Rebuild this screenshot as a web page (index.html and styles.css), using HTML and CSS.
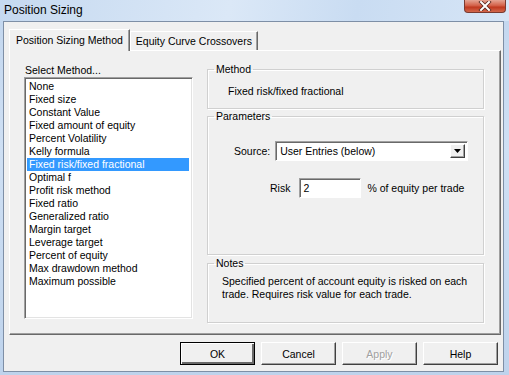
FILE: index.html
```html
<!DOCTYPE html>
<html lang="en">
<head>
    <meta charset="UTF-8">
    <title>Position Sizing</title>
    <link rel="stylesheet" href="styles.css">
</head>
<body>
    <div class="window">
        <div class="titlebar">
            <span class="title">Position Sizing</span>
            <button class="close" title="Close">
                <svg width="14" height="10" viewBox="0 0 14 10">
                    <path d="M3 1 L11 9 M11 1 L3 9" stroke="#5a2a22" stroke-width="3.6" stroke-linecap="square"/>
                    <path d="M3 1 L11 9 M11 1 L3 9" stroke="#fff" stroke-width="2" stroke-linecap="square"/>
                </svg>
            </button>
        </div>

        <div class="client">
            <div class="tabs">
                <div class="tab active">Position Sizing Method</div>
                <div class="tab">Equity Curve Crossovers</div>
            </div>

            <div class="panel">
                <div class="left-col">
                    <div class="list-label">Select Method...</div>
                    <ul class="listbox">
                        <li>None</li>
                        <li>Fixed size</li>
                        <li>Constant Value</li>
                        <li>Fixed amount of equity</li>
                        <li>Percent Volatility</li>
                        <li>Kelly formula</li>
                        <li class="selected">Fixed risk/fixed fractional</li>
                        <li>Optimal f</li>
                        <li>Profit risk method</li>
                        <li>Fixed ratio</li>
                        <li>Generalized ratio</li>
                        <li>Margin target</li>
                        <li>Leverage target</li>
                        <li>Percent of equity</li>
                        <li>Max drawdown method</li>
                        <li>Maximum possible</li>
                    </ul>
                </div>

                <div class="right-col">
                    <fieldset class="group group-method">
                        <legend>Method</legend>
                        <div class="method-name">Fixed risk/fixed fractional</div>
                    </fieldset>

                    <fieldset class="group group-params">
                        <legend>Parameters</legend>
                        <div class="source-row">
                            <span class="field-label">Source:</span>
                            <div class="combo">
                                <span class="combo-text">User Entries (below)</span>
                                <span class="combo-btn">
                                    <svg width="7" height="4" viewBox="0 0 7 4"><path d="M0 0 H7 L3.5 4 Z" fill="#000"/></svg>
                                </span>
                            </div>
                        </div>
                        <div class="risk-row">
                            <span class="field-label">Risk</span>
                            <div class="textbox">2</div>
                            <span class="unit">% of equity per trade</span>
                        </div>
                    </fieldset>

                    <fieldset class="group group-notes">
                        <legend>Notes</legend>
                        <p class="notes">Specified percent of account equity is risked on each trade. Requires risk value for each trade.</p>
                    </fieldset>
                </div>
            </div>

            <div class="buttons">
                <button class="btn default">OK</button>
                <button class="btn">Cancel</button>
                <button class="btn" disabled>Apply</button>
                <button class="btn">Help</button>
            </div>
        </div>
    </div>
</body>
</html>
```

FILE: styles.css
```css
body { margin: 0; padding: 0; font-family: "Liberation Sans", Arial, sans-serif; font-size: 10.5px; color: #000; background: #c8daf0; }

.window {
    width: 509px;
    height: 375px;
    background: linear-gradient(to bottom, #c2d6ee 0%, #cfe0f4 40%, #bed3ec 100%);
    display: flex;
    flex-direction: column;
    box-sizing: border-box;
}

/* title bar */
.titlebar {
    height: 21px;
    display: flex;
    align-items: flex-start;
    background: linear-gradient(100deg, #c5d9f0 0%, #dbe8f7 45%, #c9dcf2 70%, #d6e5f6 100%);
}
.title { font-size: 12px; margin: 3px 0 0 4px; color: #000; }
.close {
    margin-left: auto;
    margin-right: 3px;
    width: 42px;
    height: 13px;
    padding: 0;
    border: 1px solid #7a3a30;
    border-top: none;
    border-radius: 0 0 4px 4px;
    background: linear-gradient(to bottom, #e5a493 0%, #d4634b 45%, #c0391f 60%, #d2684d 100%);
    display: flex;
    align-items: center;
    justify-content: center;
}

/* client area */
.client {
    flex: 1;
    margin: 0 5px 3px 3px;
    background: #f0f0f0;
    border: 1px solid #7e8fa6;
    display: flex;
    flex-direction: column;
    padding: 7px 2px 0 5px;
}

.tabs { display: flex; align-items: flex-end; height: 21px; position: relative; z-index: 1; }
.tab {
    height: 18px;
    line-height: 18px;
    padding: 0 5px;
    border: 1px solid #fff;
    border-right: 1px solid #696969;
    border-bottom: none;
    box-shadow: inset -1px 0 #a0a0a0;
    background: #f0f0f0;
    white-space: nowrap;
}
.tab.active { height: 21px; line-height: 20px; padding: 0 6px; margin-bottom: -1px; }

.panel {
    height: 285px;
    box-sizing: border-box;
    border: 1px solid #fff;
    border-right-color: #696969;
    border-bottom-color: #696969;
    box-shadow: inset -1px -1px #a0a0a0;
    display: flex;
    padding: 12px 16px 0 14px;
}

.left-col { width: 170px; }
.list-label { height: 14px; line-height: 14px; margin-left: 1px; }
.listbox {
    list-style: none;
    margin: 0;
    padding: 2px 0 0 2px;
    width: 169px;
    height: 242px;
    box-sizing: border-box;
    background: #fff;
    border: 1px solid #a0a0a0;
    border-right-color: #fff;
    border-bottom-color: #fff;
    box-shadow: inset 1px 1px #696969, inset -1px -1px #e3e3e3;
}
.listbox li { height: 13px; line-height: 13px; padding-left: 2px; color: #000; white-space: nowrap; }
.listbox li.selected { background: #3399ff; color: #fff; margin-right: 3px; }

.right-col { margin-left: 13px; width: 277px; display: flex; flex-direction: column; gap: 1px; }

.group {
    margin: 0;
    padding: 0;
    box-sizing: border-box;
    border: 1px solid #d0d0d0;
    box-shadow: 1px 1px #fff, inset 1px 1px #fff;
}
.group legend { margin-left: 6px; padding: 0 2px; line-height: 13px; }
.group-method { height: 46px; }
.group-params { height: 145px; }
.group-notes { height: 66px; margin-top: 1px; }

.method-name { margin: 9px 0 0 20px; }

.source-row { display: flex; align-items: center; margin-top: 18px; padding-left: 26px; }
.source-row .field-label { margin-right: 5px; }
.combo {
    width: 193px;
    height: 20px;
    box-sizing: border-box;
    display: flex;
    align-items: center;
    background: #fff;
    border: 1px solid #a0a0a0;
    border-right-color: #fff;
    border-bottom-color: #fff;
    box-shadow: inset 1px 1px #696969;
    padding: 2px 2px 2px 4px;
}
.combo-text { flex: 1; }
.combo-btn {
    width: 15px;
    height: 14px;
    box-sizing: border-box;
    background: #f0f0f0;
    border: 1px solid #fff;
    border-right-color: #404040;
    border-bottom-color: #404040;
    box-shadow: inset -1px -1px #a0a0a0;
    display: flex;
    align-items: center;
    justify-content: center;
}

.risk-row { display: flex; align-items: center; margin-top: 17px; padding-left: 62px; }
.risk-row .field-label { margin-right: 9px; }
.textbox {
    width: 62px;
    height: 20px;
    line-height: 18px;
    box-sizing: border-box;
    padding-left: 3px;
    background: #fff;
    border: 1px solid #a0a0a0;
    border-right-color: #fff;
    border-bottom-color: #fff;
    box-shadow: inset 1px 1px #696969;
}
.unit { margin-left: 6px; }

.notes { margin: 5px 6px 0 14px; line-height: 13px; }

.buttons { display: flex; justify-content: flex-end; gap: 6px; padding: 7px 3px 0 0; }
.btn {
    width: 75px;
    height: 23px;
    font-family: "Liberation Sans", Arial, sans-serif;
    font-size: 10.5px;
    color: #000;
    background: #f0f0f0;
    border: 1px solid #fff;
    border-right-color: #404040;
    border-bottom-color: #404040;
    box-shadow: inset -1px -1px #a0a0a0;
    padding: 0;
}
.btn.default { border: 1px solid #000; box-shadow: inset 1px 1px #fff, inset -2px -2px #696969; }
.btn:disabled { color: #a0a0a0; text-shadow: 1px 1px #fff; }
```
